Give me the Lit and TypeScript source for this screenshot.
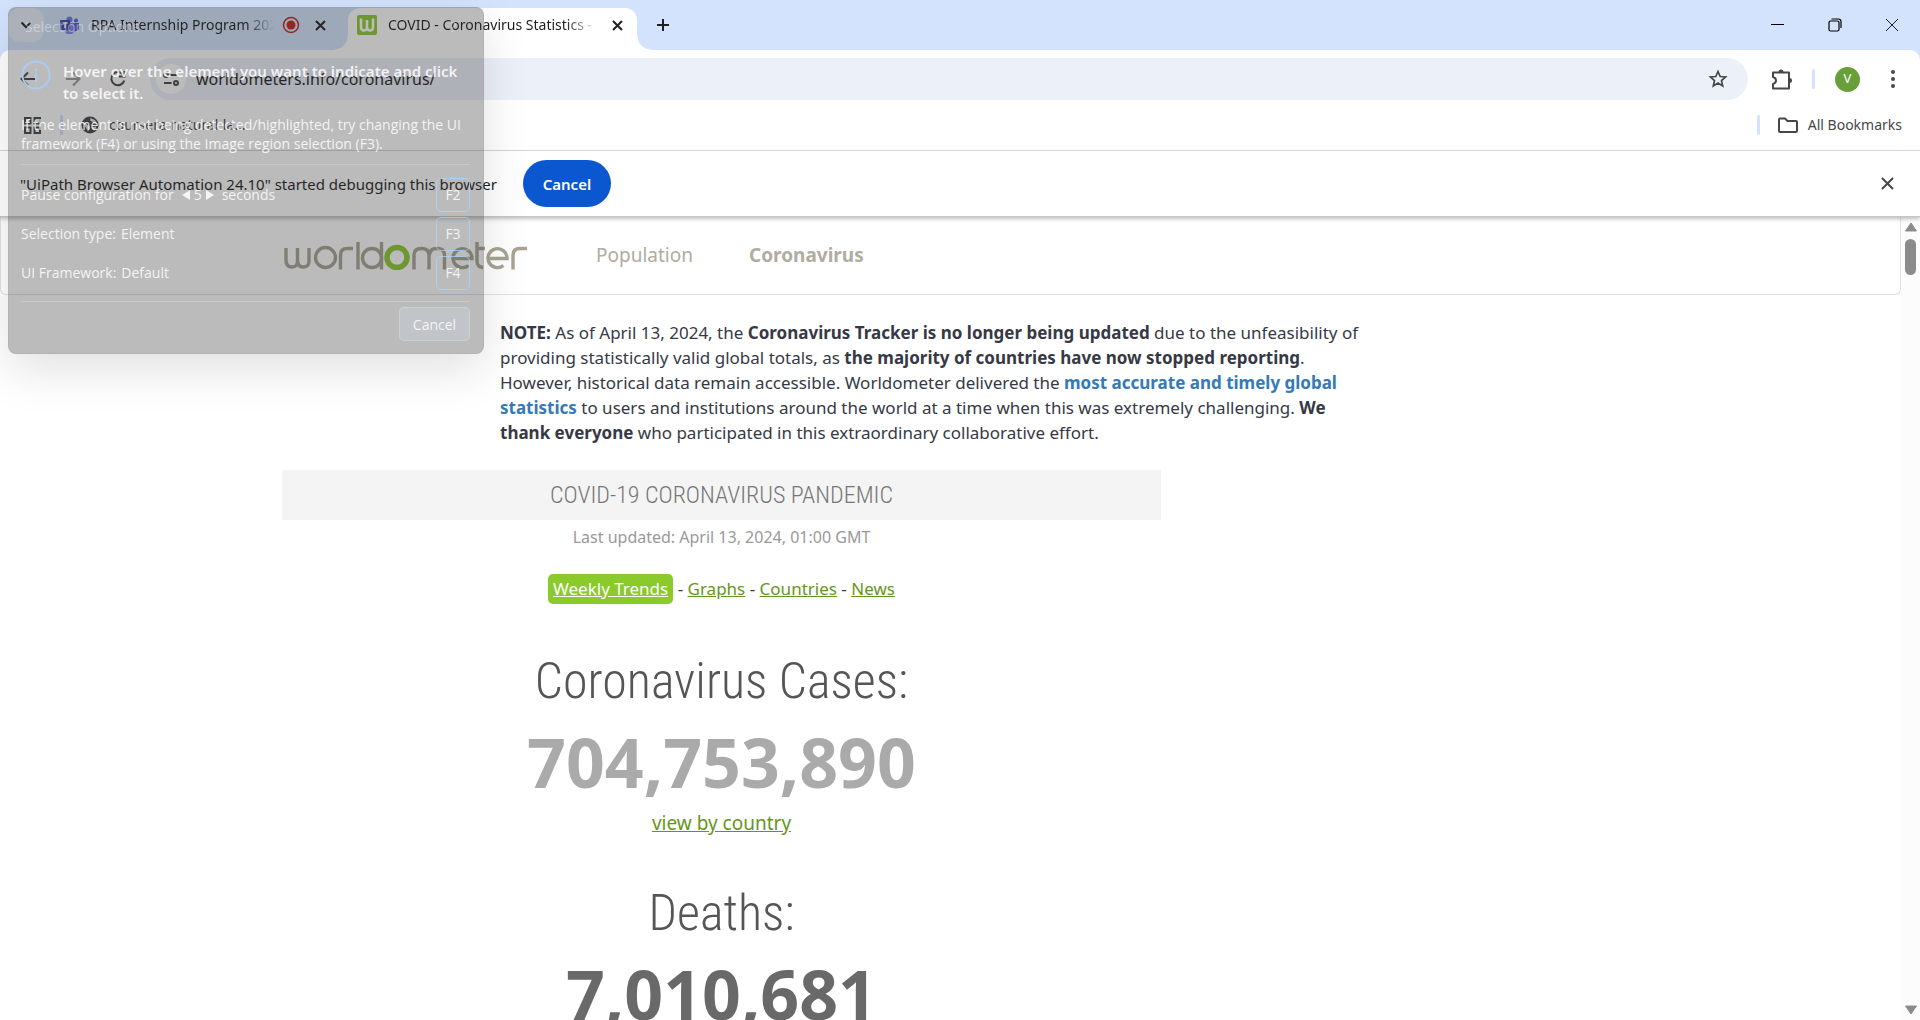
import { LitElement, html, css, svg } from "lit";
import { customElement } from "lit/decorators.js";

const icon = (w: number, h: number, body: unknown, cls = "") =>
  html`<svg class="icon ${cls}" width=${w} height=${h} viewBox="0 0 ${w} ${h}" aria-hidden="true">${body}</svg>`;

const cross = (s: number, width: number) =>
  icon(s, s, svg`<path d="M1 1L${s - 1} ${s - 1}M${s - 1} 1L1 ${s - 1}" fill="none" stroke="currentColor" stroke-width=${width} />`);

const teams = svg`
  <circle cx="9.500" cy="3.500" r="3" fill="#6d75e0"/><circle cx="16" cy="4.500" r="2" fill="#5059c9"/>
  <path d="M14 7h5v5a3.500 3.500 0 0 1-5 3z" fill="#5059c9"/>
  <path d="M5 7h9v6a4.500 4.500 0 0 1-9 2z" fill="#7b83eb"/>
  <rect x="0" y="4" width="10" height="10" rx="1" fill="#4047a8"/>
  <path d="M2.500 7h5M5 7v5" stroke="#fff" stroke-width="1.400" fill="none"/>`;

@customElement("tab-strip")
export class TabStrip extends LitElement {
  static styles = css`
    :host { display: block; background: #d3e3fd; color: #1f1f1f; font: 14px/20px "Noto Sans", "Open Sans", sans-serif; }
    .strip { display: flex; align-items: stretch; height: 50px; padding: 8px 0 0 8px; box-sizing: border-box; }
    button { border: 0; padding: 0; background: none; color: inherit; display: grid; place-items: center; }
    .icon { display: block; flex: none; }
    .search { width: 36px; height: 34px; border-radius: 12px; background: #e9f0fd; margin-right: 16px; }
    .tab { display: flex; align-items: center; gap: 8px; padding: 0 8px 8px 0; box-sizing: border-box; }
    .tab .title { margin-left: 3px; }
    .tab.idle { width: 288px; padding-right: 16px; }
    .tab.active { width: 289px; padding-left: 9px; background: #fff; border-radius: 12px 12px 0 0; position: relative; }
    .tab.active::before, .tab.active::after { content: ""; position: absolute; bottom: 0; width: 14px; height: 14px; }
    .tab.active::before { left: -14px; background: radial-gradient(circle at 0 0, #d3e3fd 13px, #fff 14px); }
    .tab.active::after { right: -14px; background: radial-gradient(circle at 100% 0, #d3e3fd 13px, #fff 14px); }
    .title { flex: 1; min-width: 0; overflow: hidden; white-space: nowrap; mask-image: linear-gradient(90deg, #000 85%, transparent); }
    .close { width: 24px; height: 24px; }
    .new { width: 32px; height: 34px; margin-left: 10px; }
    .window { margin-left: auto; display: flex; }
    .window button { width: 57px; height: 34px; }
  `;
  render() {
    return html`<div class="strip">
      <button class="search" aria-label="Search tabs">${icon(12, 8, svg`<path d="M1.500 1.500L6 6l4.500-4.500" fill="none" stroke="currentColor" stroke-width="2"/>`)}</button>
      <div class="tab idle">
        ${icon(20, 18, teams)}
        <span class="title">RPA Internship Program 2024</span>
        ${icon(18, 18, svg`<circle cx="9" cy="9" r="7.500" fill="none" stroke="#c5221f" stroke-width="1.500"/><circle cx="9" cy="9" r="4.500" fill="#c5221f"/>`)}
        <button class="close" aria-label="Close tab">${cross(11, 2)}</button>
      </div>
      <div class="tab active">
        ${icon(20, 20, svg`<rect width="20" height="20" rx="2" fill="#8cc832"/><path d="M4 3.500v8.500q0 3.500 3 3.500t3-3.500V5v7q0 3.500 3 3.500t3-3.500V3.500" fill="none" stroke="#fff" stroke-width="2.600"/>`)}
        <span class="title">COVID - Coronavirus Statistics - Worldometer</span>
        <button class="close" aria-label="Close tab">${cross(11, 2)}</button>
      </div>
      <button class="new" aria-label="New tab">${icon(14, 14, svg`<path d="M7 1v12M1 7h12" stroke="currentColor" stroke-width="2"/>`)}</button>
      <div class="window">
        <button aria-label="Minimize">${icon(14, 14, svg`<path d="M0 6.500h13" stroke="#000"/>`)}</button>
        <button aria-label="Restore">${icon(14, 14, svg`<rect x="1" y="3" width="10" height="10" rx="1.500" fill="none" stroke="#000" stroke-width="1.200"/><path d="M3.500 1h7a2.500 2.500 0 0 1 2.500 2.500V10" fill="none" stroke="#000" stroke-width="1.200"/>`)}</button>
        <button aria-label="Close window">${cross(14, 1)}</button>
      </div>
    </div>`;
  }
}

@customElement("browser-toolbar")
export class BrowserToolbar extends LitElement {
  static styles = css`
    :host { display: block; background: #d3e3fd; color: #474747; font-family: "Noto Sans", "Open Sans", sans-serif; }
    .sheet { background: #fff; border-radius: 10px 10px 0 0; border-bottom: 1px solid #dcdcdc; }
    button { border: 0; padding: 0; background: none; color: inherit; display: grid; place-items: center; }
    .icon { display: block; flex: none; }
    .nav { display: flex; align-items: center; height: 58px; padding: 0 5px; }
    .nav > button { width: 45px; height: 40px; }
    .nav > .dim { color: #9a9a9a; }
    .nav > .rule { margin-left: 9px; }
    .address { flex: 1; display: flex; align-items: center; height: 42px; margin: 0 10px; border-radius: 21px; background: #ecf0f9; padding: 0 14px 0 6px; gap: 10px; }
    .address .site { width: 30px; height: 30px; border-radius: 50%; background: #fff; }
    .address input { flex: 1; min-width: 0; border: 0; padding: 0; outline: 0; background: none; color: #1f1f1f; font: 16px/24px "Noto Sans", "Open Sans", sans-serif; }
    .address .star { width: 32px; height: 32px; }
    .rule { width: 3px; height: 20px; border-radius: 2px; background: #d3e3fd; }
    .nav > .avatar { width: 25px; height: 25px; border-radius: 50%; background: #689f38; color: #fff; font: 13px/24px Roboto, sans-serif; margin: 0 10px 0 20px; }
    .marks { display: flex; align-items: center; height: 34px; padding: 0 18px 8px 23px; font-size: 14px; line-height: 20px; color: #474747; }
    .marks .rule { margin: 0 18px; }
    .marks a { display: flex; align-items: center; gap: 10px; color: inherit; text-decoration: none; }
    .marks .all { margin-left: auto; display: flex; align-items: center; }
  `;
  render() {
    return html`<div class="sheet">
      <div class="nav">
        <button aria-label="Back">${icon(16, 16, svg`<path d="M15 8H2M8 1.500L1.500 8 8 14.500" fill="none" stroke="currentColor" stroke-width="2"/>`)}</button>
        <button class="dim" aria-label="Forward">${icon(16, 16, svg`<path d="M1 8h13M8 1.500L14.500 8 8 14.500" fill="none" stroke="currentColor" stroke-width="2"/>`)}</button>
        <button aria-label="Reload">${icon(18, 18, svg`<path d="M14.500 5A6.600 6.600 0 1 0 15.300 10.500M15.500 1v5.500H10" fill="none" stroke="currentColor" stroke-width="2"/>`)}</button>
        <div class="address">
          <button class="site" aria-label="Site information">${icon(16, 16, svg`<g fill="none" stroke="currentColor" stroke-width="2"><circle cx="3" cy="4" r="2"/><path d="M7.500 4H15M1 12h7.500"/><circle cx="13" cy="12" r="2"/></g>`)}</button>
          <input type="text" aria-label="Address" value="worldometers.info/coronavirus/">
          <button class="star" aria-label="Bookmark this page">${icon(20, 20, svg`<path d="M10 2.500l2.200 5 5.400.500-4.100 3.600 1.200 5.400-4.700-2.900-4.700 2.900 1.200-5.400L2.400 8l5.400-.500z" fill="none" stroke="currentColor" stroke-width="1.700"/>`)}</button>
        </div>
        <button aria-label="Extensions">${icon(22, 22, svg`<path d="M3 4.500H19v16H3v-4.500q3-.800 3-3.500t-3-3.500z" fill="none" stroke="currentColor" stroke-width="2" stroke-linejoin="round"/><path d="M8.500 4a2.500 2.500 0 0 1 5 0zM19.500 10a2.500 2.500 0 0 1 0 5z" fill="currentColor"/>`)}</button>
        <span class="rule"></span>
        <button class="avatar" aria-label="Profile">V</button>
        <button aria-label="Menu">${icon(4, 18, svg`<g fill="currentColor"><circle cx="2" cy="2" r="2"/><circle cx="2" cy="9" r="2"/><circle cx="2" cy="16" r="2"/></g>`)}</button>
      </div>
      <div class="marks">
        <button aria-label="Apps">${icon(19, 19, svg`<g fill="none" stroke="currentColor" stroke-width="2"><path d="M2 2h5.500v5.500H2zM11.500 2H17v5.500h-5.500zM2 11.500h5.500V17H2zM11.500 11.500H17V17h-5.500z"/></g>`)}</button>
        <span class="rule"></span>
        <a href="#coursera">${icon(18, 18, svg`<circle cx="9" cy="9" r="8.500" fill="#3f4246"/><path d="M2 6.500q3.500 0 4.500 2.500 3 .500 2 3.500l-1.500 3zM9.500 2l-.500 2.500 2.500 1.500 1 1.500 3.500.500-2-4zM11 11l4.500-.500-2 4-2-1z" fill="#e3e3e3"/>`)}<span>coursera-natural-la...</span></a>
        <div class="all"><span class="rule"></span><a href="#bookmarks">${icon(20, 17, svg`<path d="M1 14V2.500Q1 1.500 2 1.500h5l2.500 2.500H18q1 0 1 1v9q0 1-1 1H2q-1 0-1-1z" fill="none" stroke="currentColor" stroke-width="2"/>`)}<span>All Bookmarks</span></a></div>
      </div>
    </div>`;
  }
}

@customElement("debug-bar")
export class DebugBar extends LitElement {
  static styles = css`
    :host { display: block; position: relative; background: #fff; border-bottom: 1px solid #c6c6c6; box-shadow: 0 2px 4px rgba(0, 0, 0, 0.25); font: 15px/24px "Noto Sans", "Open Sans", sans-serif; color: #1f1f1f; }
    .bar { display: flex; align-items: center; gap: 26px; height: 65px; padding: 0 24px 0 20px; }
    .cancel { width: 88px; height: 47px; border: 0; border-radius: 24px; background: #0b57d0; color: #fff; font: 600 15px/24px "Noto Sans", "Open Sans", sans-serif; padding: 0; }
    .close { margin-left: auto; border: 0; background: none; padding: 0; width: 18px; height: 24px; display: grid; place-items: center; color: #474747; }
  `;
  render() {
    return html`<div class="bar"><span>"UiPath Browser Automation 24.10" started debugging this browser</span>
      <button class="cancel">Cancel</button>
      <button class="close" aria-label="Dismiss">${cross(13, 2)}</button></div>`;
  }
}

const logo = svg`
  <g fill="none" stroke="#a8a493" stroke-width="3.400">
    <path d="M2 6v12q0 7 6 7t5.500-7V6M13.500 18q0 7 6 7t5.500-7V6"/>
    <circle cx="41.500" cy="15.500" r="10"/>
    <path d="M56.500 27.500V13q0-6.500 7-6.500H69"/>
    <path d="M74 0v27.500"/>
    <circle cx="88" cy="16" r="9.500"/><path d="M97.500 0v27.500"/>
    <path d="M130 27.500V13q0-6.500 7.500-6.500t7.500 6.500v14.500M145.500 13q0-6.500 7.500-6.500t7.500 6.500v14.500"/>
    <path d="M169 16.500h19a9.500 9.500 0 1 0-3.500 7"/>
    <path d="M193 0v19q0 6 6 6.500M193 6.500h8"/>
    <path d="M204 16.500h19a9.500 9.500 0 1 0-3.500 7"/>
    <path d="M229 27.500V13q0-6.500 7-6.500H243"/>
  </g>
  <circle cx="113" cy="15.500" r="10" fill="none" stroke="#8cc832" stroke-width="5.500"/>`;

@customElement("covid-page")
export class CovidPage extends LitElement {
  static styles = css`
    :host { display: flex; flex: 1; min-height: 0; overflow: hidden; background: #fff; color: #333; font: 17px/25px "Noto Sans", sans-serif; }
    .page { flex: 1; min-width: 0; }
    a { color: #67951b; }
    .head { display: flex; align-items: center; gap: 69px; height: 77px; padding-left: 283px; border: 1px solid #e1e1e1; border-top: 0; border-radius: 0 0 6px 6px; }
    .head nav { display: flex; gap: 56px; font-size: 19px; }
    .head nav a { color: #b0ac9f; text-decoration: none; }
    .head nav a.here { font-weight: 700; }
    .icon { display: block; }
    .note { margin: 25px 0 0; padding-left: 500px; max-width: 866px; color: #363945; }
    .note a { color: #337ab7; font-weight: 700; text-decoration: none; }
    .col { width: 879px; margin-left: 282px; text-align: center; display: flex; flex-direction: column; align-items: center; }
    h2 { align-self: stretch; margin: 25px 0 0; height: 50px; background: #f4f4f4; color: #777; font: 300 24px/50px "Roboto Condensed", Roboto, sans-serif; }
    .updated { margin: 3px 0 0; color: #999; font-size: 16px; line-height: 28px; }
    .links { margin: 23px 0 0; font-size: 17px; line-height: 30px; }
    .links .pill { display: inline-block; background: #8aca2b; color: #fff; border-radius: 5px; padding: 0 5px; }
    h1 { margin: 0; padding-top: 46px; color: #555; font: 300 50px/62px "Roboto Condensed", Roboto, sans-serif; }
    .num { font-weight: 700; font-size: 68px; line-height: 96px; color: #aaa; margin-top: 2px; }
    .num.dead { color: #696969; }
    .by { font-size: 19px; line-height: 26px; }
    .scroll { width: 19px; display: flex; flex-direction: column; align-items: center; justify-content: space-between; background: #fcfcfc; padding: 5px 0; box-sizing: border-box; }
    .up { display: flex; flex-direction: column; align-items: center; gap: 7px; }
    .thumb { width: 11px; height: 36px; border-radius: 6px; background: #8b8b8b; }
  `;
  render() {
    return html`<main class="page">
        <header class="head">
          <a href="#home" aria-label="worldometer">${icon(243, 28, logo)}</a>
          <nav><a href="#population">Population</a><a class="here" href="#coronavirus">Coronavirus</a></nav>
        </header>
        <p class="note"><b>NOTE:</b> As of April 13, 2024, the <b>Coronavirus Tracker is no longer being updated</b> due to the unfeasibility of providing statistically valid global totals, as <b>the majority of countries have now stopped reporting</b>. However, historical data remain accessible. Worldometer delivered the <a href="#about">most accurate and timely global statistics</a> to users and institutions around the world at a time when this was extremely challenging. <b>We thank everyone</b> who participated in this extraordinary collaborative effort.</p>
        <div class="col">
          <h2>COVID-19 CORONAVIRUS PANDEMIC</h2>
          <p class="updated">Last updated: April 13, 2024, 01:00 GMT</p>
          <p class="links"><a class="pill" href="#trends">Weekly Trends</a> - <a href="#graphs">Graphs</a> - <a href="#countries">Countries</a> - <a href="#news">News</a></p>
          <h1>Coronavirus Cases:</h1>
          <div class="num">704,753,890</div>
          <a class="by" href="#countries">view by country</a>
          <h1>Deaths:</h1>
          <div class="num dead">7,010,681</div>
        </div>
      </main>
      <div class="scroll">
        <div class="up">${icon(12, 10, svg`<path d="M6 1L11.500 9H.500z" fill="#8b8b8b" stroke="#8b8b8b" stroke-linejoin="round"/>`)}<div class="thumb"></div></div>
        ${icon(12, 10, svg`<path d="M6 9L11.500 1H.500z" fill="#8b8b8b" stroke="#8b8b8b" stroke-linejoin="round"/>`)}
      </div>`;
  }
}

@customElement("selection-panel")
export class SelectionPanel extends LitElement {
  static styles = css`
    :host { display: block; width: 476px; height: 347px; box-sizing: border-box; padding: 7px 13px 13px 12px; border-radius: 8px; border: 1px solid rgba(150, 150, 150, 0.2); background: rgba(50, 50, 50, 0.33); box-shadow: 0 16px 48px rgba(0, 0, 0, 0.12); color: rgba(255, 255, 255, 0.85); font: 14px/19px "Open Sans", "Noto Sans", sans-serif; }
    .bar { display: flex; justify-content: space-between; padding: 2px 14px 0 4px; color: rgba(255, 255, 255, 0.4); }
    .lead { display: flex; gap: 12px; margin-top: 24px; }
    .lead strong { font: 600 15px/22px "Noto Sans", "Open Sans", sans-serif; }
    .icon { display: block; flex: none; }
    .hint { margin: 11px 0 0; padding-bottom: 11px; border-bottom: 1px solid rgba(255, 255, 255, 0.2); }
    .row { display: flex; align-items: center; justify-content: space-between; height: 39px; }
    .rows { padding: 10px 0 9px; border-bottom: 1px solid rgba(255, 255, 255, 0.2); }
    .text { display: flex; align-items: center; gap: 5px; }
    .stepper { display: flex; align-items: center; gap: 4px; margin: 0 3px; }
    kbd { width: 34px; height: 34px; box-sizing: border-box; border: 1px solid rgba(170, 215, 255, 0.7); border-radius: 5px; font: inherit; line-height: 32px; text-align: center; }
    .step { border: 0; background: none; padding: 0; color: inherit; }
    .foot { display: flex; justify-content: flex-end; padding-top: 5px; }
    .cancel { width: 71px; height: 34px; padding: 0; border: 1px solid rgba(255, 255, 255, 0.2); border-radius: 5px; background: rgba(205, 215, 225, 0.35); color: inherit; font: inherit; }
  `;
  render() {
    const row = (label: unknown, key: string) => html`<div class="row"><div class="text">${label}</div><kbd>${key}</kbd></div>`;
    return html`
      <div class="bar"><span>Selection Options</span><span>?</span></div>
      <div class="lead">${icon(30, 30, svg`<circle cx="15" cy="15" r="13.500" fill="none" stroke="#a9cdf2" stroke-width="1.800"/><path d="M15 13v9M15 8.500v2.500" stroke="#a9cdf2" stroke-width="2"/>`)}<strong>Hover over the element you want to indicate and click to select it.</strong></div>
      <p class="hint">If the element is not being detected/highlighted, try changing the UI framework (F4) or using the Image region selection (F3).</p>
      <div class="rows">
        ${row(html`<span>Pause configuration for</span><div class="stepper"><button class="step" aria-label="Less">${icon(8, 10, svg`<path d="M8 0v10L0 5z" fill="currentColor"/>`)}</button><span>5</span><button class="step" aria-label="More">${icon(8, 10, svg`<path d="M0 0v10l8-5z" fill="currentColor"/>`)}</button></div><span>seconds</span>`, "F2")}
        ${row(html`<span>Selection type:</span><span>Element</span>`, "F3")}
        ${row(html`<span>UI Framework:</span><span>Default</span>`, "F4")}
      </div>
      <div class="foot"><button class="cancel">Cancel</button></div>`;
  }
}

@customElement("app-root")
export class AppRoot extends LitElement {
  static styles = css`
    :host { display: flex; flex-direction: column; position: relative; height: 100vh; overflow: hidden; background: #fff; }
    .panel { position: absolute; left: 8px; top: 7px; z-index: 2; }
  `;
  render() {
    return html`<tab-strip></tab-strip><browser-toolbar></browser-toolbar><debug-bar></debug-bar><covid-page></covid-page><selection-panel class="panel"></selection-panel>`;
  }
}
